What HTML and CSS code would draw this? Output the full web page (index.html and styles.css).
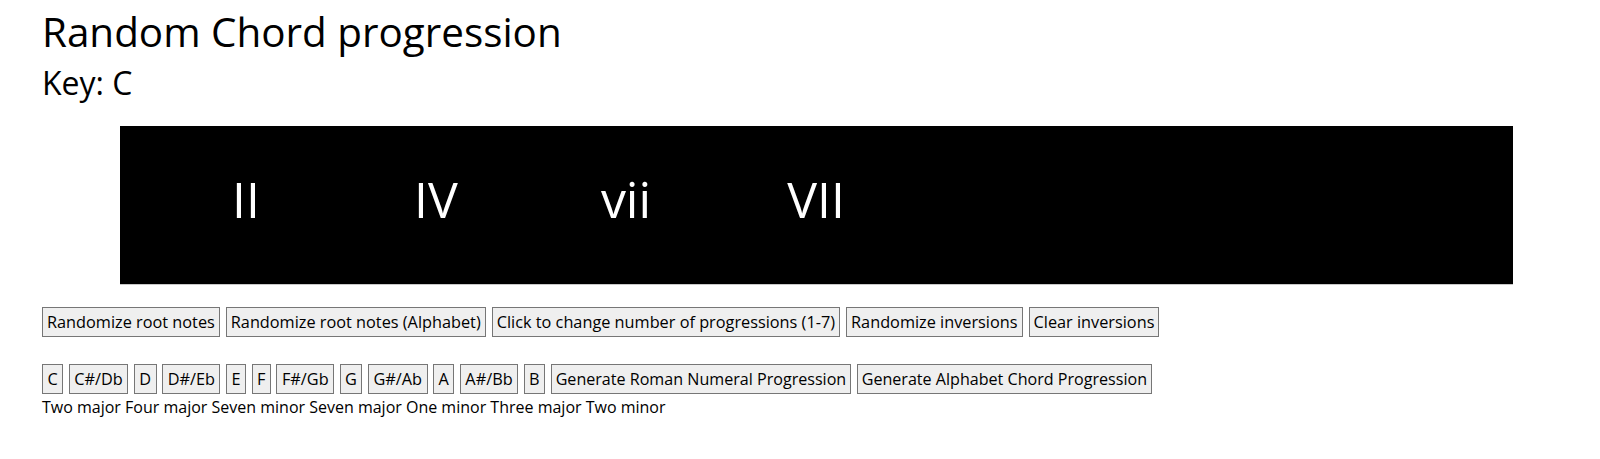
FILE: index.html
```html
<!DOCTYPE html>
<html>
<head>
<meta charset="utf-8">
<title>Random Chord progression</title>
<link rel="stylesheet" href="styles.css">
</head>
<body>
<div class="page">
  <h1 class="title">Random Chord progression</h1>
  <h2 class="key">Key: C</h2>
  <div class="board">
    <span class="chord">II</span>
    <span class="chord">IV</span>
    <span class="chord">vii</span>
    <span class="chord">VII</span>
  </div>
  <div class="controls controls-top">
    <button class="btn">Randomize root notes</button>
    <button class="btn">Randomize root notes (Alphabet)</button>
    <button class="btn">Click to change number of progressions (1-7)</button>
    <button class="btn">Randomize inversions</button>
    <button class="btn">Clear inversions</button>
  </div>
  <div class="controls controls-keys">
    <button class="btn note">C</button>
    <button class="btn note">C#/Db</button>
    <button class="btn note">D</button>
    <button class="btn note">D#/Eb</button>
    <button class="btn note">E</button>
    <button class="btn note">F</button>
    <button class="btn note">F#/Gb</button>
    <button class="btn note">G</button>
    <button class="btn note">G#/Ab</button>
    <button class="btn note">A</button>
    <button class="btn note">A#/Bb</button>
    <button class="btn note">B</button>
    <button class="btn gen">Generate Roman Numeral Progression</button>
    <button class="btn gen">Generate Alphabet Chord Progression</button>
  </div>
  <div class="names">Two major Four major Seven minor Seven major One minor Three major Two minor</div>
</div>
</body>
</html>
```

FILE: styles.css
```css
html, body {
  margin: 0;
  padding: 0;
  background: #ffffff;
}

body {
  font-family: "Open Sans", "Noto Sans", "Liberation Sans", sans-serif;
  color: #000000;
}

.page {
  padding: 8px 34px 0 42px;
}

.title {
  margin: 0;
  font-size: 40.4px;
  line-height: 48px;
  font-weight: 400;
}

.key {
  margin: 9px 0 0 0;
  font-size: 32px;
  line-height: 36px;
  font-weight: 400;
}

.board {
  margin: 25px 0 0 78px;
  width: 1393px;
  height: 159px;
  box-sizing: border-box;
  background: #000000;
  border-bottom: 1px solid #c8c8c8;
  padding: 43px 0 0 31px;
  display: flex;
}

.chord {
  width: 190px;
  text-align: center;
  color: #ffffff;
  font-size: 50px;
  line-height: 60px;
  font-weight: 400;
}

.controls {
  display: flex;
  gap: 6px;
}

.controls-top {
  margin-top: 22px;
}

.controls-keys {
  margin-top: 27px;
  gap: 5.5px;
}

.btn {
  font-family: inherit;
  font-size: 16.3px;
  line-height: 22px;
  padding: 3px 4px;
  margin: 0;
  border: 1px solid #767676;
  background: #efefef;
  color: #000000;
  border-radius: 0;
}

.note {
  padding: 3px 4.5px;
}

.gen {
  font-size: 16.1px;
}

.names {
  margin-top: 2px;
  font-size: 16px;
  line-height: 22px;
}
```
